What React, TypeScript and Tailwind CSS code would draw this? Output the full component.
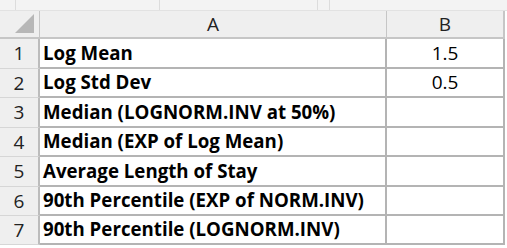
import React from "react";

const rows: [string, string][] = [
  ["Log Mean", "1.5"],
  ["Log Std Dev", "0.5"],
  ["Median (LOGNORM.INV at 50%)", ""],
  ["Median (EXP of Log Mean)", ""],
  ["Average Length of Stay", ""],
  ["90th Percentile (EXP of NORM.INV)", ""],
  ["90th Percentile (LOGNORM.INV)", ""],
];

const heights = ["h-[30px]", "h-[29px]", "h-[30px]", "h-[29px]", "h-[30px]", "h-[29px]", "h-[29px]"];

export default function App() {
  return (
    <div className="w-[507px] h-[248px] bg-white overflow-hidden font-['Open_Sans',sans-serif] text-black">
      {/* strip left over from the formula bar */}
      <div className="flex h-[11px] bg-[#f3f3f3] border-b border-[#e2e2e2]">
        <div className="w-[16px] border-r border-[#dcdcdc]" />
        <div className="w-[144px] border-r border-[#dcdcdc]" />
        <div className="w-[158px] border-r border-[#dcdcdc]" />
        <div className="w-[12px] border-r border-[#dcdcdc]" />
      </div>

      <div className="grid grid-cols-[40px_347px_118px]">
        {/* header row */}
        <div className="relative h-[28px] bg-[#efefef] border-r border-b-2 border-[#c6c6c6]">
          <div className="absolute right-[5px] bottom-[4px] w-0 h-0 border-l-[19px] border-l-transparent border-b-[19px] border-b-[#b7b7b7]" />
        </div>
        <div className="h-[28px] bg-[#efefef] border-r border-b-2 border-[#c6c6c6] flex items-center justify-center text-[19px] leading-none text-[#222]">
          A
        </div>
        <div className="h-[28px] bg-[#efefef] border-r-2 border-b-2 border-[#c6c6c6] flex items-center justify-center text-[19px] leading-none text-[#222]">
          B
        </div>

        {rows.map(([label, value], i) => (
          <React.Fragment key={label}>
            <div
              className={`${heights[i]} bg-[#efefef] border-r-2 border-b border-r-[#bcbcbc] border-b-[#d6d6d6] flex items-center justify-center text-[19px] leading-none text-[#222]`}
            >
              {i + 1}
            </div>
            <div
              className={`${heights[i]} border-r-2 border-b-2 border-[#b4b4b4] flex items-center pl-[3px] text-[18.7px] font-bold leading-none whitespace-nowrap`}
            >
              {label}
            </div>
            <div
              className={`${heights[i]} border-r-2 border-b-2 border-[#b4b4b4] flex items-center justify-center text-[19px] leading-none`}
            >
              {value}
            </div>
          </React.Fragment>
        ))}
      </div>
    </div>
  );
}
